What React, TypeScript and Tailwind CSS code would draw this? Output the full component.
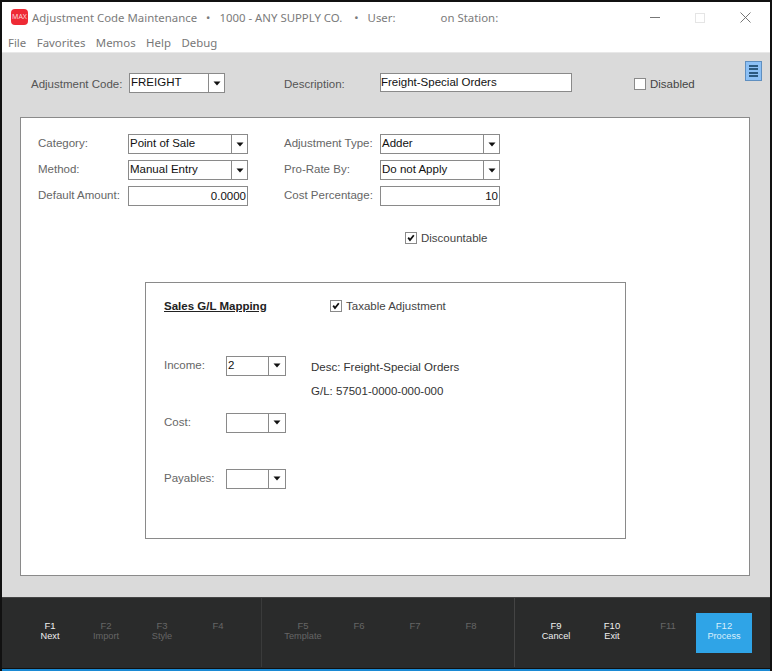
function Arrow() {
  return (
    <svg width="8" height="5" viewBox="0 0 8 5">
      <polygon points="0.5,0.5 7.5,0.5 4,4.5" fill="#111" />
    </svg>
  );
}

function Combo({ value, width, arrowW = "w-[16px]" }: { value: string; width: string; arrowW?: string }) {
  return (
    <div className={`flex h-[20px] items-stretch border border-[#8a8a8a] bg-white ${width}`}>
      <div className="flex-1 pl-[1px] text-[11.5px] leading-[17px] text-[#111]">{value}</div>
      <div className={`flex items-center justify-center border-l border-[#8a8a8a] ${arrowW}`}>
        <Arrow />
      </div>
    </div>
  );
}

function NumberBox({ value }: { value: string }) {
  return (
    <div className="h-[20px] w-[120px] border border-[#8a8a8a] bg-white pr-[1px] text-right text-[11.5px] leading-[19px] text-[#111]">
      {value}
    </div>
  );
}

function Check({ checked, label, className }: { checked?: boolean; label: string; className?: string }) {
  return (
    <div className={`flex items-center ${className ?? ""}`}>
      <div className="flex h-[12px] w-[12px] items-center justify-center border border-[#8a8a8a] bg-white">
        {checked && (
          <svg width="8" height="8" viewBox="0 0 8 8">
            <path d="M1.2 3.6 L3 6 L6.8 1.2" stroke="#111" strokeWidth="1.8" fill="none" />
          </svg>
        )}
      </div>
      <span className="ml-[4px] mt-[2px] text-[11.5px] leading-none text-[#444]">{label}</span>
    </div>
  );
}

function FormRow({ label, children, labelW = "w-[90px]" }: { label: string; children: React.ReactNode; labelW?: string }) {
  return (
    <div className="flex h-[26px] items-center">
      <div className={`text-[11.5px] text-[#666] ${labelW}`}>{label}</div>
      {children}
    </div>
  );
}

function GlRow({ label, value, className }: { label: string; value?: string; className?: string }) {
  return (
    <div className={`flex items-center ${className ?? ""}`}>
      <div className="w-[62px] text-[11.5px] text-[#666]">{label}</div>
      <Combo value={value ?? ""} width="w-[60px]" arrowW="w-[17px]" />
    </div>
  );
}

function FKey({ k, label, state }: { k: string; label?: string; state?: "on" | "off" | "primary" }) {
  const color = state === "on" ? "text-[#f0f0f0]" : state === "primary" ? "text-[#d8eefb] bg-[#2fa4e7]" : "text-[#666666]";
  return (
    <div className={`flex h-[40px] w-[56px] flex-col items-center pt-[7px] text-[9.5px] leading-[11px] ${color}`}>
      <div>{k}</div>
      <div className="text-[9.2px]">{label ?? "\u00a0"}</div>
    </div>
  );
}

export default function App() {
  return (
    <div className="flex h-[671px] w-[772px] flex-col border-x-2 border-t-2 border-[#111] bg-white font-['Liberation_Sans',sans-serif]">
      {/* title bar */}
      <div className="flex h-[31px] items-center font-['Noto_Sans',sans-serif] text-[11.4px] text-[#7b7b7b]">
        <div className="-mt-[1px] ml-[9px] flex h-[16px] w-[17px] items-center justify-center rounded-[4px] bg-[#ee2a35] text-[7px] text-[#fbd5d7]">MAX</div>
        <div className="ml-[4px]">Adjustment Code Maintenance</div>
        <div className="ml-[9px]">•</div>
        <div className="ml-[9px]">1000 - ANY SUPPLY CO.</div>
        <div className="ml-[12px]">•</div>
        <div className="ml-[9px]">User:</div>
        <div className="ml-[45px]">on Station:</div>
        <div className="ml-auto flex items-center">
          <div className="h-px w-[10px] bg-[#777]" />
          <div className="ml-[35px] h-[10px] w-[10px] border border-[#e5e5e5]" />
          <svg className="ml-[35px] mr-[19px]" width="11" height="11" viewBox="0 0 11 11">
            <path d="M0.5 0.5 L10.5 10.5 M10.5 0.5 L0.5 10.5" stroke="#666" strokeWidth="0.9" />
          </svg>
        </div>
      </div>

      {/* menu bar */}
      <div className="flex h-[19px] items-center gap-[10.5px] pl-[6px] font-['Noto_Sans',sans-serif] text-[11.4px] text-[#777]">
        <span>File</span>
        <span>Favorites</span>
        <span>Memos</span>
        <span>Help</span>
        <span>Debug</span>
      </div>

      {/* gray body */}
      <div className="flex flex-1 flex-col border-t border-[#e8e8e8] bg-[#dadada]">
        <div className="relative flex h-[64px] items-start pt-[20px] text-[11.5px] text-[#555]">
          <div className="ml-[29px] w-[98px] pt-[3px]">Adjustment Code:</div>
          <Combo value="FREIGHT" width="w-[96px]" />
          <div className="ml-[59px] w-[96px] pt-[3px]">Description:</div>
          <div className="h-[19px] w-[192px] border border-[#8a8a8a] bg-white leading-[16px] text-[#111]">
            Freight-Special Orders
          </div>
          <Check label="Disabled" className="ml-[62px] pt-[4px]" />
          <div className="absolute left-[743px] top-[8px] flex h-[20px] w-[17px] flex-col justify-center gap-[1.5px] border border-[#5f8fc0] bg-[#8cc0f5] px-[3px]">
            <div className="h-[2px] bg-[#2c5a80]" />
            <div className="h-[2px] bg-[#2c5a80]" />
            <div className="h-[2px] bg-[#2c5a80]" />
            <div className="h-[2px] bg-[#2c5a80]" />
          </div>
        </div>

        {/* white panel */}
        <div className="mx-[18px] h-[459px] w-[730px] border border-[#8a8a8a] bg-white">
          <div className="flex pl-[17px] pt-[13px]">
            <div className="w-[246px]">
              <FormRow label="Category:"><Combo value="Point of Sale" width="w-[120px]" /></FormRow>
              <FormRow label="Method:"><Combo value="Manual Entry" width="w-[120px]" /></FormRow>
              <FormRow label="Default Amount:"><NumberBox value="0.0000" /></FormRow>
            </div>
            <div>
              <FormRow label="Adjustment Type:" labelW="w-[96px]"><Combo value="Adder" width="w-[120px]" /></FormRow>
              <FormRow label="Pro-Rate By:" labelW="w-[96px]"><Combo value="Do not Apply" width="w-[120px]" /></FormRow>
              <FormRow label="Cost Percentage:" labelW="w-[96px]"><NumberBox value="10" /></FormRow>
            </div>
          </div>

          <Check checked label="Discountable" className="ml-[384px] mt-[22px]" />

          {/* G/L box */}
          <div className="ml-[124px] mt-[37px] h-[257px] w-[481px] border border-[#8a8a8a] px-[18px] pt-[15px]">
            <div className="flex items-center">
              <div className="w-[166px] text-[11.5px] font-bold text-[#222] underline">Sales G/L Mapping</div>
              <Check checked label="Taxable Adjustment" />
            </div>

            <div className="mt-[41px] flex items-start">
              <GlRow label="Income:" value="2" />
              <div className="ml-[25px] pt-[3px] text-[11.5px] leading-[17px] text-[#333]">
                <div>Desc: Freight-Special Orders</div>
                <div className="mt-[7px]">G/L: 57501-0000-000-000</div>
              </div>
            </div>
            <GlRow label="Cost:" className="mt-[13px]" />
            <GlRow label="Payables:" className="mt-[36px]" />
          </div>
        </div>
      </div>

      {/* function keys */}
      <div className="flex h-[71px] items-center border-t border-[#444] bg-[#2a2b2b] pb-[1px]">
        <div className="ml-[20px] flex">
          <FKey k="F1" label="Next" state="on" />
          <FKey k="F2" label="Import" />
          <FKey k="F3" label="Style" />
          <FKey k="F4" />
        </div>
        <div className="ml-[15px] h-full w-px bg-[#3a3b3b]" />
        <div className="ml-[13px] flex">
          <FKey k="F5" label="Template" />
          <FKey k="F6" />
          <FKey k="F7" />
          <FKey k="F8" />
        </div>
        <div className="ml-[15px] h-full w-px bg-[#444]" />
        <div className="ml-[13px] flex">
          <FKey k="F9" label="Cancel" state="on" />
          <FKey k="F10" label="Exit" state="on" />
          <FKey k="F11" />
          <FKey k="F12" label="Process" state="primary" />
        </div>
      </div>
      <div className="h-px bg-[#111]" />
      <div className="h-[2px] bg-[#1a8ad4]" />
    </div>
  );
}
